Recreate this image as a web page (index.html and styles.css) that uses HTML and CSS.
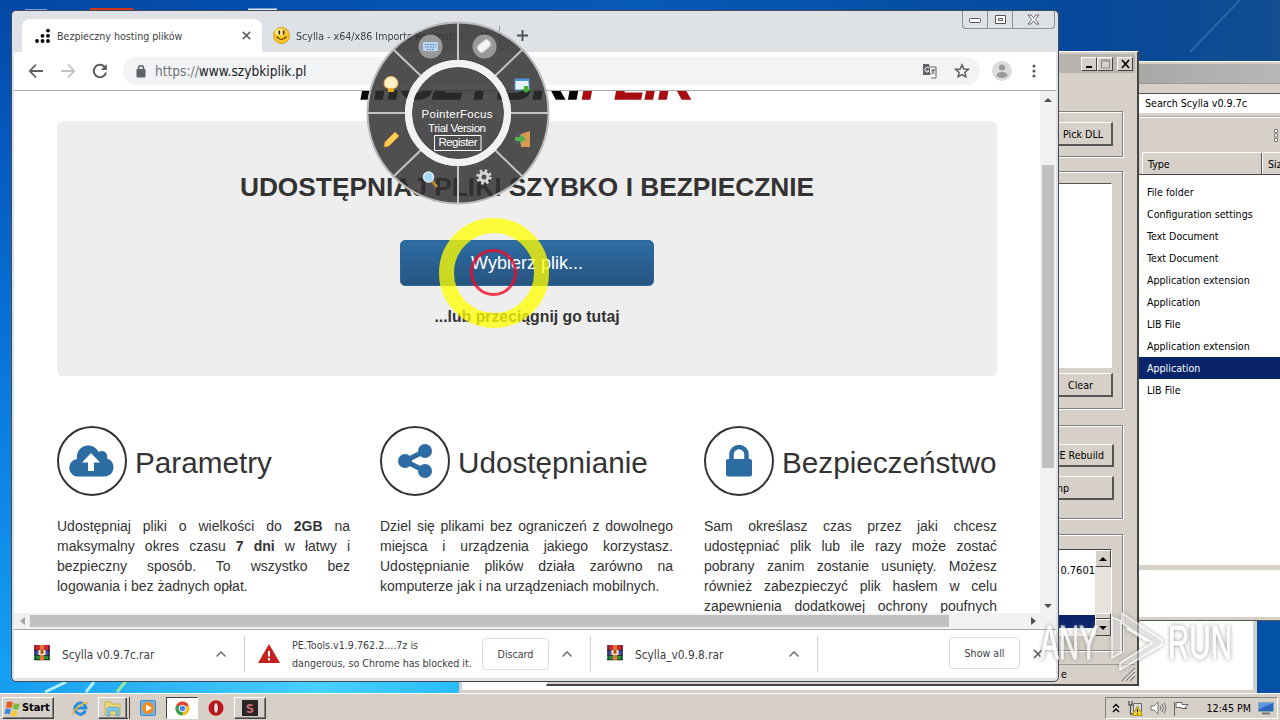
FILE: index.html
```html
<!DOCTYPE html>
<html lang="pl">
<head>
  <meta charset="UTF-8">
  <meta name="viewport" content="width=device-width,initial-scale=1">
  <title>Bezpieczny hosting plików</title>
  <link rel="stylesheet" href="styles.css">
</head>
<body>
<svg width="0" height="0" class="defs">
  <symbol id="rar" viewBox="0 0 16 16">
    <path fill="#c8283c" d="M0 0h16v5H0z"/><path fill="#4a4fae" d="M0 5h16v5H0z"/><path fill="#27913c" d="M0 10h16v5H0z"/>
    <path fill="#222" d="M0 5h16v.7H0zM0 10h16v.7H0zM0 14.3h16v.9H0zM1.5 0h.7v15h-.7zM14 0h.7v15H14z"/>
    <path fill="#e8742c" d="M6 0h4v15H6z"/><path fill="#f4ead2" d="M4.5 5h1.8v4h3.4V5h1.8v5h-7z"/><path fill="#7b4a28" d="M7.3 5h1.4v3H7.3z"/>
  </symbol>
  <symbol id="up" viewBox="0 0 12 8"><path d="M1.500 6.500 6 2l4.500 4.500" fill="none" stroke="#777" stroke-width="1.6"/></symbol>
  <symbol id="x" viewBox="0 0 10 10"><path d="M1 1l8 8M9 1 1 9" fill="none" stroke="#5a5d61" stroke-width="1.7"/></symbol>
</svg>

<div class="desktop">
  <svg class="wallpaper" width="1280" height="693">
    <path d="M1240 0 1190 52" stroke="#3c78b8" stroke-width="2" opacity=".6"/>
    <path d="M45 692 66 682M86 692l8-10" stroke="#b6f0fc" stroke-width="3"/><path d="M117 692l9-11" stroke="#9be89a" stroke-width="3"/>
    <path d="M25 10h22" stroke="#7f9fd8" stroke-width="2"/><path d="M90 9.500h43" stroke="#d8341c" stroke-width="3"/><path d="M248 9.500h29" stroke="#dfe8f6" stroke-width="2"/>
  </svg>

  <div class="win notepad"></div>

  <div class="win explorer">
    <div class="ex-title"></div>
    <div class="ex-address"><div class="ex-search">Search Scylla v0.9.7c</div></div>
    <div class="ex-tools"><svg width="8" height="14" viewBox="0 0 8 14" fill="#fff" stroke="#777"><path d="M.5.5h3v3h-3zM.5 5h3v3h-3zM.5 9.500h3v3h-3zM6 2h3M6 6.500h3M6 11h3"/></svg></div>
    <div class="ex-head"><span>Type</span><span>Size</span></div>
    <ul class="ex-list">
      <li>File folder</li>
      <li>Configuration settings</li>
      <li>Text Document</li>
      <li>Text Document</li>
      <li>Application extension</li>
      <li>Application</li>
      <li>LIB File</li>
      <li>Application extension</li>
      <li class="selected">Application</li>
      <li>LIB File</li>
    </ul>
    <div class="ex-details"></div>
  </div>

  <div class="win scylla">
    <div class="sc-title">
      <b class="cap"><svg width="13" height="12"><path d="M3 9h6" stroke="#000" stroke-width="2"/></svg></b>
      <b class="cap"><svg width="13" height="12"><path d="M2.500 2h8v8h-8zM2.500 3h8" stroke="#888" fill="none"/></svg></b>
      <b class="cap close"><svg width="13" height="12"><path d="M3 2l7 8M10 2l-7 8" stroke="#000" stroke-width="1.6"/></svg></b>
    </div>
    <div class="group g1"><button class="btn">Pick DLL</button></div>
    <div class="group g2"><div class="sc-tree"></div><button class="btn btn-clear">Clear</button></div>
    <div class="group g3"><button class="btn">PE Rebuild</button><button class="btn btn-dump">Dump</button></div>
    <div class="group g4">
      <div class="sc-log">
        <div class="log-text"><p>0.7601</p><div class="log-selected"></div></div>
        <div class="log-scroll"><b class="cap"><i class="tri tri-up"></i></b><span></span><b class="cap thumb"></b><b class="cap"><i class="tri tri-down"></i></b></div>
      </div>
    </div>
    <div class="sc-status"><span>e</span><svg width="14" height="14"><path d="M1 14 14 1M5 14l9-9M9 14l5-5" stroke="#888" stroke-width="1.6"/><path d="M2.500 14 14 2.500M6.500 14 14 6.500" stroke="#fff"/></svg></div>
  </div>

  <div class="win chrome">
    <div class="tabstrip">
      <div class="tab active">
        <svg width="15" height="15" viewBox="0 0 15 15"><circle cx="2" cy="13" r="1.900"/><circle cx="7.500" cy="13" r="1.900"/><circle cx="13" cy="13" r="1.900"/><circle cx="7.500" cy="7.800" r="1.900"/><circle cx="13" cy="7.800" r="1.900"/><circle cx="13" cy="2.600" r="1.900"/></svg>
        <span>Bezpieczny hosting plików</span>
        <svg class="tab-x" width="9" height="9"><use href="#x"/></svg>
      </div>
      <div class="tab second">
        <svg width="17" height="17" viewBox="0 0 17 17"><circle cx="8.500" cy="8.500" r="8" fill="#f8c928" stroke="#d99a18"/><ellipse cx="7" cy="5" rx="5" ry="3.500" fill="#fde884"/><path d="M6.300 3.500v4M10.600 3.500v4" stroke="#3a2a08" stroke-width="1.600"/><path d="M3.500 9.500q5 6 10 0" fill="none" stroke="#6a4208" stroke-width="1.200"/></svg>
        <span class="fade">Scylla - x64/x86 Imports Reconstruction</span>
        <svg class="tab-x" width="9" height="9"><use href="#x"/></svg>
      </div>
      <svg class="newtab" width="13" height="13"><path d="M6.500 1v11M1 6.500h11" stroke="#4a4d51" stroke-width="1.800"/></svg>
      <div class="winbtns">
        <span><svg width="14" height="8"><rect x="1.500" y="2.500" width="11" height="4" rx="1" fill="#fff" stroke="#555"/></svg></span>
        <span><svg width="13" height="11"><path fill="#fff" stroke="#555" d="M1.500 1.500h10v8h-10zM4.500 4.500h4v2h-4z"/></svg></span>
        <span><svg width="13" height="11"><path d="M1 1h3l2.500 3L9 1h3L8.300 5.500 12 10H9L6.500 7 4 10H1l3.700-4.500z" fill="#fff" stroke="#666"/></svg></span>
      </div>
    </div>

    <div class="toolbar">
      <svg width="16" height="16" fill="none" stroke="#5a5d61" stroke-width="1.800"><path d="M15 8H2M8 1.500 1.800 8 8 14.500"/></svg>
      <svg width="16" height="16" fill="none" stroke="#bfc1c4" stroke-width="1.800"><path d="M1 8h13M8 1.500 14.200 8 8 14.500"/></svg>
      <svg width="16" height="16" fill="none" stroke="#5a5d61" stroke-width="2"><path d="M14 9.500A6.200 6.200 0 1 1 12.500 3.700"/><path d="M14.800 1v6H8.800z" fill="#5a5d61" stroke="none"/></svg>
      <div class="omnibox">
        <svg width="10" height="13" viewBox="0 0 10 13"><path d="M1 4.500h8v7.500H1z" fill="#5f6368" stroke="#5f6368"/><path d="M2.500 5V3.200a2.500 2.500 0 0 1 5 0V5" fill="none" stroke="#5f6368" stroke-width="1.500"/></svg>
        <p class="url"><span>https://</span>www.szybkiplik.pl</p>
        <svg width="15" height="15" viewBox="0 0 15 15"><path d="M1 0h6l2 11H1z" fill="#5f6368"/><path d="M8 3h6v11H9" fill="#fff" stroke="#5f6368"/><path d="M7 4.200A2.300 2.300 0 1 0 7 7H5" fill="none" stroke="#fff"/><path d="M9 6h4.500M11 5v1M12.500 6 9.500 10.500M9.800 7l3 3.500" stroke="#5f6368"/></svg>
        <svg width="16" height="16" viewBox="0 0 16 16"><path d="m8 1.800 1.800 4.200 4.500.4-3.400 3 1 4.400L8 11.500l-3.900 2.300 1-4.400-3.400-3 4.500-.4z" fill="none" stroke="#5a5d61" stroke-width="1.500"/></svg>
      </div>
      <svg class="avatar" width="20" height="20"><circle cx="10" cy="10" r="10" fill="#dcdcdc"/><circle cx="10" cy="6.500" r="3" fill="#999"/><ellipse cx="10" cy="14" rx="5.500" ry="3" fill="#999"/></svg>
      <svg class="dots" width="4" height="14" fill="#5a5d61"><circle cx="2" cy="2" r="1.600"/><circle cx="2" cy="7" r="1.600"/><circle cx="2" cy="12" r="1.600"/></svg>
    </div>

    <div class="view">
      <div class="page">
        <div class="logo">...SZYBKI<span>PLIK</span></div>
        <div class="jumbotron">
          <h1>UDOSTĘPNIAJ PLIKI SZYBKO I BEZPIECZNIE</h1>
          <a class="pick">Wybierz plik...</a>
          <p>...lub przeciągnij go tutaj</p>
        </div>
        <div class="features">
          <div class="feature">
            <h3><i class="round"><svg width="44" height="32" viewBox="0 0 44 32"><path fill="#2d6ca2" d="M9 31.500A8.800 8.800 0 0 1 7 14C6 6 11.500.500 18 .500c5 0 8.500 2.500 10.500 6.500 5-3 10 1 8.500 6.500 4 1 6.500 4.500 6.500 9 0 5-4 9-9 9z"/><path fill="#fff" d="m21 8 9 9.500h-6V26h-6v-8.500h-6z"/></svg></i><span>Parametry</span></h3>
            <p>Udostępniaj pliki o wielkości do <b>2GB</b> na maksymalny okres czasu <b>7 dni</b> w łatwy i bezpieczny sposób. To wszystko bez logowania i bez żadnych opłat.</p>
          </div>
          <div class="feature">
            <h3><i class="round"><svg width="36" height="34" viewBox="0 0 36 34"><path d="M28 7 8 17l20 10" fill="none" stroke="#2d6ca2" stroke-width="5"/><g fill="#2d6ca2"><circle cx="28" cy="7" r="7"/><circle cx="8" cy="17" r="7"/><circle cx="28" cy="27" r="7"/></g></svg></i><span>Udostępnianie</span></h3>
            <p>Dziel się plikami bez ograniczeń z dowolnego miejsca i urządzenia jakiego korzystasz. Udostępnianie plików działa zarówno na komputerze jak i na urządzeniach mobilnych.</p>
          </div>
          <div class="feature">
            <h3><i class="round"><svg width="26" height="32" viewBox="0 0 26 32"><rect y="14" width="26" height="17.500" rx="2" fill="#2d6ca2"/><path d="M5.500 15V9.500a7.500 7.500 0 0 1 15 0V15" fill="none" stroke="#2d6ca2" stroke-width="4.500"/></svg></i><span>Bezpieczeństwo</span></h3>
            <p>Sam określasz czas przez jaki chcesz udostępniać plik lub ile razy może zostać pobrany zanim zostanie usunięty. Możesz również zabezpieczyć plik hasłem w celu zapewnienia dodatkowej ochrony poufnych danych.</p>
          </div>
        </div>
      </div>
      <div class="vscroll"><i class="tri tri-up"></i><div class="vthumb"></div><i class="tri tri-down"></i></div>
    </div>
    <div class="hscroll"><i class="tri tri-left"></i><div class="hthumb"></div><i class="tri tri-right"></i></div>

    <div class="downloads">
      <div class="dl dl-1"><svg width="16" height="16"><use href="#rar"/></svg><span>Scylla v0.9.7c.rar</span><svg class="more" width="12" height="8"><use href="#up"/></svg></div>
      <div class="dl dl-2">
        <svg width="22" height="19" viewBox="0 0 22 19"><path d="M11 0 22 19H0z" fill="#c5221f"/><path d="M11 7v5.500M11 14v2.500" stroke="#fff" stroke-width="2"/></svg>
        <p>PE.Tools.v1.9.762.2....7z is<br>dangerous, so Chrome has blocked it.</p>
        <button class="flat">Discard</button>
        <svg class="more" width="12" height="8"><use href="#up"/></svg>
      </div>
      <div class="dl dl-3"><svg width="16" height="16"><use href="#rar"/></svg><span>Scylla_v0.9.8.rar</span><svg class="more" width="12" height="8"><use href="#up"/></svg></div>
      <button class="flat show-all">Show all</button>
      <svg class="dl-close" width="10" height="10"><use href="#x"/></svg>
    </div>
  </div>

  <svg class="pie" width="184" height="184" viewBox="-92 -92 184 184">
    <circle r="72" fill="none" stroke="#303030" stroke-width="38" opacity=".84"/>
    <circle r="46" fill="#303030" opacity=".84"/>
    <circle r="90.500" fill="none" stroke="#bbb" stroke-width="2"/>
    <path d="M0-91v38M0 91V53M-91 0h38M91 0H53M-64-63l27 26M64-63 37-37M-64 63l27-26M64 63 37 37" stroke="#c4c4c4" stroke-width="2"/>
    <circle r="49.500" fill="none" stroke="#f2f2f2" stroke-width="7"/>
    <g fill="#999"><circle cx="-27.500" cy="-66.500" r="12"/><circle cx="26.500" cy="-66.500" r="12"/></g>
    <g><rect x="-35" y="-71" width="15" height="9" rx="1" fill="#b9d6f4"/><path d="M-33-68.500h11M-33-66h11M-31-63.500h7" stroke="#567fae" stroke-dasharray="1.500 1"/></g>
    <rect x="-7" y="-4" width="14" height="8" rx="3" fill="#f4f4f4" stroke="#ccc" transform="translate(26 -67) rotate(-40)"/>
    <path d="M-74-29c0-10 14-10 14 0q0 3-4 4.500h-6q-4-1.500-4-4.500z" fill="#fff0c8" stroke="#f0b040"/><path d="M-70-24h6v3h-6z" fill="#eea820"/>
    <rect x="57" y="-34" width="14" height="11" fill="#e8f3ff" stroke="#4f94d8"/><path d="M57-34h14v2H57z" fill="#4f94d8"/><path d="M64-27h4v3h3l-5 4-5-4h3z" fill="#45ad30" transform="translate(2 0)"/>
    <path d="m-73 29 10-10 4 4-10 10-5 1z" fill="#ffcf55" stroke="#e08b20" stroke-width=".800"/>
    <path d="m63 21 9-3v16h-9z" fill="#d99a50"/><path d="M58 20h5v12h-5z" fill="#556"/><path d="M57 24h5v-3l6 5-6 5v-3h-5z" fill="#57ae4c"/>
    <path d="m-26 68 5 6" stroke="#b88440" stroke-width="3"/><circle cx="-29.500" cy="64" r="5" fill="#a8d8fa" stroke="#ddecf8" stroke-width="1.500"/>
    <g transform="translate(26 64)"><circle r="4" fill="none" stroke="#d8d8d8" stroke-width="3"/><circle r="6.500" fill="none" stroke="#d8d8d8" stroke-width="2.500" stroke-dasharray="2.550 2.550"/></g>
    <g class="pie-text"><text y="5" x="-1" textLength="71">PointerFocus</text><text y="19" x="-1" textLength="58">Trial Version</text><text y="33" x="0" textLength="39">Register</text></g>
    <path d="M-23.500 22.500h46.500v15h-46.500z" fill="none" stroke="#fff"/>
  </svg>

  <div class="pointer"><i></i></div>

  <svg class="watermark" width="200" height="70" viewBox="1036 608 200 70">
    <g class="wm-text"><text x="1040" y="659" textLength="58" lengthAdjust="spacingAndGlyphs">ANY</text><text x="1168" y="659" textLength="64" lengthAdjust="spacingAndGlyphs">RUN</text></g>
    <g class="wm-mark"><path d="M1112 658V617l9 4v32zM1122 613l40 27v5l-42 25v-7l32-20-30-20z"/><path d="m1127 628 21 13" stroke-width="3"/></g>
  </svg>
</div>

<div class="taskbar">
  <div class="start"><svg width="16" height="15" viewBox="0 0 16 15"><path d="M2 1q3-1 6 .500L6.500 7Q4 6 1 7z" fill="#e85a24"/><path d="M9 2q3 1.500 6 .500l-2 6q-3 .500-5.500-1z" fill="#7cbb38"/><path d="M.500 8q3-1 5.500.500l-1.500 5Q2.500 12.500-.500 13z" fill="#3c8be0"/><path d="M7 9q3 1.500 5.500 1L11 15.500q-3 0-5.500-1.500z" fill="#f8c830"/></svg>Start</div>
  <div class="quick">
    <div class="app"><svg width="17" height="17" viewBox="0 0 17 17"><path d="M13.500 10.500A5.500 5.500 0 1 1 13.800 8H4" fill="none" stroke="#2a8ade" stroke-width="3"/><path d="M1 15C-1 12 9 3 16 2.500" fill="none" stroke="#e8b830" stroke-width="1.500"/></svg></div>
    <div class="app raised stack"><svg width="18" height="17" viewBox="0 0 18 17"><path d="M1 4V2h6l1 2h8v11H1z" fill="#eed974" stroke="#c9ad48"/><path d="M3 16V9q0-2 2-2h8q2 0 2 2v7h-3v-5H6v5z" fill="#7cc4e8" stroke="#4f9cc4" stroke-width=".600"/></svg></div>
    <div class="app"><svg width="16" height="16"><rect x=".500" y=".500" width="15" height="15" rx="1" fill="#6fb4ea" stroke="#3f86c4"/><circle cx="8" cy="8" r="6" fill="#f48a18"/><path d="M6 4.500 12 8l-6 3.500z" fill="#fff"/></svg></div>
    <div class="app pressed"><svg width="15" height="15" viewBox="0 0 15 15"><circle cx="7.500" cy="7.500" r="7" fill="#f0c020"/><path d="M7.500 7.500 1.400 4A7 7 0 0 1 13.600 4z" fill="#de4032"/><path d="M1.400 4A7 7 0 0 0 7 14.500l2-5.500-1.500-1.500z" fill="#3aa254"/><circle cx="7.500" cy="7.500" r="3.300" fill="#4a86e8" stroke="#fff"/></svg></div>
    <div class="app"><svg width="16" height="16"><ellipse cx="8" cy="8" rx="7.500" ry="7.800" fill="#c4161c"/><ellipse cx="8" cy="8" rx="2.500" ry="5.500" fill="#e8dada" stroke="#7c0a0e"/></svg></div>
    <div class="app raised"><svg width="16" height="16"><path fill="#2a2626" d="M0 0h16v16H0z"/><text x="8" y="13" text-anchor="middle" font-size="13" font-weight="700" fill="#c86a72">S</text></svg></div>
  </div>
  <div class="tray">
    <svg width="8" height="11" fill="none" stroke="#000" stroke-width="1.300"><path d="M1 4.500 4 1.500l3 3M1 9l3-3 3 3"/></svg>
    <svg width="16" height="16"><path d="M2 1v4h3V1M3.500 5v9H7" fill="none" stroke="#555" stroke-width="1.300"/><path d="M6.500 3.500h8v8h-8z" fill="#ddd" stroke="#666"/><path d="m10.500 6 5 9.500h-10z" fill="#f4d820" stroke="#a89010"/><path d="M10.500 9v3M10.500 13v1.200" stroke="#000"/></svg>
    <svg width="16" height="14" fill="#fff" stroke="#777"><path d="M1 5h3l4-4v12L4 9H1z"/><path d="M10 4.500q2 2.500 0 5M12 3q3 4 0 8M14 1.500q3.500 5.500 0 11" fill="none"/></svg>
    <svg width="17" height="15" fill="#fff" stroke="#666"><path d="M1.500 1v14M3 1.500h6v2h6l-3 3 2 1H8.500v-1H3z"/></svg>
    <time>12:45 PM</time>
    <svg width="16" height="14"><path d="M.500 1.500h15v9H.500z" fill="#2c64c4" stroke="#8aa"/><path d="M1 2h14L1 8z" fill="#5c98e4"/><path d="M4 12.500h8" stroke="#777" stroke-width="2"/></svg>
  </div>
</div>
</body>
</html>
```
FILE: styles.css
```css
:root {
  --face: #d6d0c8;
  --shade: #808080;
  --ui: "DejaVu Sans Condensed", "DejaVu Sans", sans-serif;
}
*, *::before, *::after { box-sizing: border-box; }
body {
  margin: 0;
  width: 1280px; height: 720px;
  overflow: hidden;
  font: 10.6px/14px var(--ui);
  font-stretch: condensed;
  color: #000;
}
p, h1, h3, ul { margin: 0; padding: 0; }
svg { display: block; flex: none; overflow: visible; }
button { font: inherit; color: inherit; padding: 0; }
.defs { position: absolute; }

.desktop {
  position: relative;
  height: 693px;
  overflow: hidden;
  background:
    linear-gradient(90deg, #149cf0, #48d0fc 25%, #28bcf8 36%, transparent 36.1%) 0 680px / 100% 13px no-repeat,
    linear-gradient(90deg, transparent 80%, #0451a8 80%) 0 600px / 100% 100px no-repeat,
    linear-gradient(#0447a6, #0554b8 15%, #0a78dc 55%, #16a2f4) 0 0 / 12px 100% no-repeat,
    linear-gradient(90deg, #0447a6, #0759b8 50%, #06489a 85%, #124e90);
}
.wallpaper { position: absolute; left: 0; top: 0; }
.win { position: absolute; }
.tri { width: 0; height: 0; border: 4px solid transparent; flex: none; }
.tri-up { border-top: 0; border-bottom-color: currentColor; }
.tri-down { border-bottom: 0; border-top-color: currentColor; }
.tri-left { border-left: 0; border-right-color: currentColor; border-right-width: 5px; }
.tri-right { border-right: 0; border-left-color: currentColor; border-left-width: 5px; }

.notepad {
  left: 459px; top: 560px; width: 798px; height: 133px;
  background: #fff;
  border: 3px solid var(--face);
  border-right-width: 4px;
}

/* file explorer */
.explorer {
  left: 1120px; top: 61px; width: 200px; height: 560px;
  display: flex; flex-direction: column;
  padding: 2px 0 3px 19px;
  background: var(--face);
  border-top: 1px solid #fff;
  border-bottom: 1px solid #555;
}
.ex-title { height: 20px; background: linear-gradient(90deg, #a8a8a8, #bcbcbc); border-bottom: 1px solid #999; }
.ex-address { height: 33px; padding-top: 9px; border-bottom: 1px solid #aaa; }
.ex-search { height: 20px; padding: 2px 6px; background: #fff; border-top: 1px solid #555; }
.ex-tools { height: 35px; padding: 11px 0 0 135px; border-top: 1px solid #fff; }
.ex-head { display: flex; height: 23px; padding-left: 3px; border-bottom: 1px solid #444; }
.ex-head span {
  width: 120px; flex: none; padding: 4px 5px;
  border: solid #fff; border-width: 1px 0 0 1px;
  box-shadow: inset -1px 0 #555;
}
.ex-list { height: 390px; padding-top: 6px; list-style: none; background: #fff; }
.ex-list li { height: 22px; padding: 4px 8px; white-space: nowrap; }
.ex-list .selected { background: #0a246a; color: #fff; }
.ex-details { flex: 1; margin-top: 5px; background: #fff; }

/* Scylla dialog */
.scylla {
  left: 546px; top: 51px; width: 593px; height: 635px;
  display: flex; flex-direction: column;
  padding: 2px 2px 0;
  background: var(--face);
  border: 1px solid #fff;
  border-right: 2px solid #444; border-bottom: 2px solid #444;
}
.sc-title { display: flex; justify-content: flex-end; height: 19px; padding: 3px 2px 0; background: #b8b5b1; }
.cap {
  display: flex; align-items: center; justify-content: center;
  width: 16px; height: 14px;
  background: var(--face);
  border: 1px solid; border-color: #fff #444 #444 #fff;
}
.cap.close { margin-left: 4px; }
.group {
  width: 200px; margin: 0 12px 0 auto;
  display: flex; flex-direction: column; align-items: flex-end;
  border: 1px solid var(--shade);
  box-shadow: 1px 1px #fff, inset 0 1px #fff;
}
.btn {
  width: 90px; height: 24px;
  background: var(--face);
  border: 1px solid #fff; border-right: 2px solid #555; border-bottom: 2px solid #555;
  text-align: right; padding: 1px 8px 0 0;
}
.g1 { height: 46px; margin-top: 38px; padding: 10px 9px; }
.g2 { height: 238px; margin-top: 14px; padding: 11px 9px; }
.sc-tree { width: 150px; height: 190px; margin-right: 1px; background: #fff; border: 1px solid #555; border-right-color: #fff; border-bottom-color: #fff; }
.btn-clear { margin-top: 5px; padding-right: 18px; }
.g3 { height: 94px; margin-top: 16px; padding: 18px 8px; }
.btn-dump { height: 26px; margin-top: 9px; padding-right: 43px; }
.g4 { height: 117px; margin-top: 15px; padding: 14px 10px; }
.sc-log { display: flex; width: 150px; height: 89px; background: #fff; border-top: 1px solid #444; border-right: 1px solid #fff; }
.log-text { flex: 1; padding-top: 14px; text-align: right; }
.log-text p { height: 51px; font-size: 11px; }
.log-selected { height: 13px; background: #0a246a; }
.log-scroll { width: 16px; display: flex; flex-direction: column; background: #e6e2dc; }
.log-scroll .cap { height: 17px; }
.log-scroll span { flex: 1; }
.log-scroll .thumb { height: 6px; }
.sc-status {
  display: flex; justify-content: space-between;
  height: 19px; margin-top: 13px; padding: 2px 0 0 512px;
  border-top: 1px solid #999;
}

/* browser window */
.chrome {
  left: 11px; top: 10px; width: 1048px; height: 672px;
  display: flex; flex-direction: column;
  padding: 0 2px 3px;
  background: #dee1e6;
  border: 1px solid #444a55;
  border-radius: 5px;
  color: #3c4043;
}
.tabstrip { display: flex; height: 41px; padding-left: 8px; align-items: flex-start; }
.tab {
  display: flex; align-items: center;
  width: 238px; height: 33px; margin-top: 8px; padding: 0 11px 0 11px;
}
.tab.active { width: 240px; padding-left: 13px; background: #fff; border-radius: 8px 8px 0 0; }
.tab span { flex: 1; margin-left: 7px; padding-top: 1px; white-space: nowrap; overflow: hidden; }
.tab .fade { margin-left: 6px; -webkit-mask-image: linear-gradient(90deg, #000 80%, transparent); }
.tab-x { margin-left: 6px; }
.tab.second { background: linear-gradient(#9aa0a6, #9aa0a6) 100% 50% / 1px 20px no-repeat; }
.newtab { margin: 18px 0 0 16px; }
.winbtns { display: flex; margin: 0 1px 0 auto; height: 18px; border: 1px solid #8c9098; border-top: 0; border-radius: 0 0 4px 4px; }
.winbtns span { display: flex; align-items: center; justify-content: center; width: 25px; border-right: 1px solid #8c9098; }
.winbtns span:last-child { width: 41px; border: 0; }
.toolbar { display: flex; align-items: center; gap: 16px; height: 39px; padding-left: 14px; background: #fff; border-bottom: 1px solid #aaa; }
.omnibox {
  display: flex; align-items: center;
  width: 857px; height: 28px; margin-left: -1px; padding: 0 10px 0 13px;
  border-radius: 14px; background: #f1f3f4;
}
.url { flex: 1; margin-left: 9px; font-size: 13.6px; color: #202124; }
.url span { color: #70757a; }
.omnibox svg + svg { margin-left: 17px; }
.avatar { margin-left: -4px; }
.dots { margin-left: 4px; }

.view { display: flex; height: 522px; background: #fff; }
.page {
  flex: 1; height: 522px; overflow: hidden;
  padding: 0 43px;
  font: 14px/20px "Liberation Sans", Arial, sans-serif;
  color: #333;
}
/* the page is scrolled, only the foot of the logo shows */
.logo {
  height: 63px; margin-top: -33px;
  font-size: 49.2px; font-weight: 700; font-style: italic; line-height: 47px;
  color: #000; text-align: center; white-space: nowrap;
  -webkit-text-stroke: 1.6px currentColor;
}
.logo span { color: #a80d12; }
.jumbotron {
  display: flex; flex-direction: column; align-items: center;
  height: 255px; padding-top: 51px;
  background: #eee; border-radius: 6px;
}
.jumbotron h1 { font-size: 26.3px; line-height: 30px; white-space: nowrap; }
.pick {
  width: 254px; height: 46px; margin-top: 38px;
  border: 1px solid #2b669a; border-radius: 5px;
  background: linear-gradient(#2d6ca2, #285580);
  color: #fff; font-size: 18px; line-height: 44px; text-align: center;
}
.jumbotron p { margin-top: 21px; font-size: 15.8px; font-weight: 700; }
.features { display: grid; grid-template-columns: 293px 294px 293px; justify-content: space-between; margin-top: 50px; }
.feature h3 { display: flex; align-items: center; gap: 8px; height: 70px; margin-bottom: 20px; font-size: 29.7px; font-weight: 400; line-height: 34px; white-space: nowrap; }
.feature h3 span { padding-top: 4px; }
.round { display: flex; align-items: center; justify-content: center; width: 70px; height: 70px; flex: none; border: 2px solid #333; border-radius: 50%; }
.feature p { text-align: justify; }
.feature:nth-child(2) p { padding-right: 1px; }
.vscroll { width: 16px; display: flex; flex-direction: column; align-items: center; padding: 7px 0 5px; background: #f1f1f1; color: #505050; }
.vthumb { width: 12px; height: 303px; margin-top: 63px; background: #c1c1c1; }
.vscroll .tri-down { margin-top: auto; }
.hscroll { display: flex; align-items: center; height: 17px; padding: 0 20px 0 6px; background: #f1f1f1; color: #505050; border-bottom: 1px solid #aaa; }
.hscroll .tri-left { color: #a3a3a3; }
.hthumb { width: 919px; height: 12px; margin-left: 5px; background: #c1c1c1; }
.hscroll .tri-right { margin-left: auto; }

.downloads { display: flex; align-items: center; flex: 1; background: #fff; }
.dl { display: flex; align-items: center; height: 36px; border-right: 1px solid #ccc; }
.dl svg:first-child { margin-top: -2px; }
.dl span { margin: 2px 0 0 12px; font-size: 11.8px; }
.more { margin: 0 17px 0 auto; }
.dl-1 { width: 231px; padding-left: 20px; }
.dl-2 { width: 346px; padding-left: 13px; }
.dl-3 { width: 227px; padding-left: 16px; }
.dl p { width: 190px; margin: -1px 0 0 12px; line-height: 18px; white-space: nowrap; }
.flat { width: 67px; height: 32px; background: #fff; border: 1px solid #dadce0; border-radius: 4px; }
.show-all { width: 71px; margin: -2px 0 0 auto; }
.dl-close { margin: 0 13px; }

/* overlays above the windows */
.pie { position: absolute; left: 366px; top: 21px; }
.pie-text { font: 11.5px "Liberation Sans", sans-serif; fill: #fff; text-anchor: middle; }
.pointer {
  position: absolute; left: 439px; top: 218px; width: 110px; height: 110px;
  display: flex; align-items: center; justify-content: center;
  border: 15px solid rgba(255, 255, 0, .76); border-radius: 50%;
}
.pointer i { width: 47px; height: 47px; margin: -1px 1px 0 0; border: 3px solid rgba(240, 10, 40, .8); border-radius: 50%; }
.watermark { position: absolute; left: 1036px; top: 608px; font: 48px "Liberation Sans Narrow", "Liberation Sans", sans-serif; }
.wm-text, .wm-mark { fill: #fff; stroke: #fff; opacity: .75; filter: drop-shadow(0 0 2px #777); }
.wm-mark { fill: rgba(255, 255, 255, .5); stroke-width: 1.5; }

/* taskbar */
.taskbar { display: flex; align-items: center; height: 27px; padding: 2px 2px 0; background: var(--face); border-top: 1px solid #fff; }
.start, .raised { border: 1px solid; border-color: #fff #444 #444 #fff; box-shadow: inset -1px -1px var(--shade); }
.start { display: flex; align-items: center; gap: 1px; width: 52px; height: 22px; padding-left: 2px; font-size: 11px; font-weight: 700; letter-spacing: -.1px; }
.quick { display: flex; margin-left: 10px; }
.app { display: flex; align-items: center; justify-content: center; width: 32px; height: 22px; margin-right: 2px; }
.stack { border-right: 4px double #444; }
.pressed { background: #fff; border: 1px solid; border-color: #444 #fff #fff #444; }
.tray { display: flex; align-items: center; gap: 7px; width: 173px; height: 22px; margin-left: auto; padding: 0 3px 0 6px; border: 1px solid; border-color: var(--shade) #fff #fff var(--shade); }
.tray time { margin-left: auto; white-space: nowrap; }
```
